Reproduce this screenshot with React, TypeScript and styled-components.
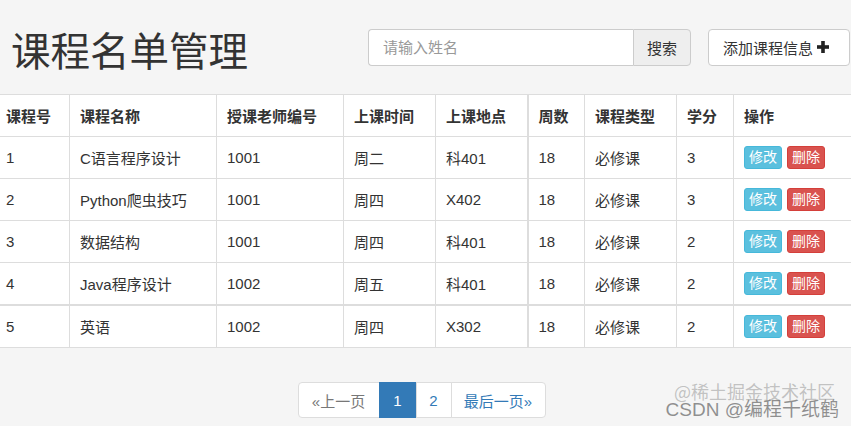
import React from 'react';
import styled, { createGlobalStyle } from 'styled-components';

const GlobalStyle = createGlobalStyle`
  html, body {
    margin: 0;
    padding: 0;
    background: #f5f5f5;
    overflow: hidden;
  }
  body {
    font-family: "Liberation Sans", "Noto Sans CJK SC", sans-serif;
    color: #333;
  }
`;

interface Course {
  id: number;
  name: string;
  teacher: string;
  time: string;
  place: string;
  weeks: number;
  type: string;
  credit: number;
}

const courses: Course[] = [
  { id: 1, name: 'C语言程序设计', teacher: '1001', time: '周二', place: '科401', weeks: 18, type: '必修课', credit: 3 },
  { id: 2, name: 'Python爬虫技巧', teacher: '1001', time: '周四', place: 'X402', weeks: 18, type: '必修课', credit: 3 },
  { id: 3, name: '数据结构', teacher: '1001', time: '周四', place: '科401', weeks: 18, type: '必修课', credit: 2 },
  { id: 4, name: 'Java程序设计', teacher: '1002', time: '周五', place: '科401', weeks: 18, type: '必修课', credit: 2 },
  { id: 5, name: '英语', teacher: '1002', time: '周四', place: 'X302', weeks: 18, type: '必修课', credit: 2 },
];

const columns = ['课程号', '课程名称', '授课老师编号', '上课时间', '上课地点', '周数', '课程类型', '学分', '操作'];
const colWidths = [74, 147, 127, 92, 92, 57, 92, 57, 118];

const Page = styled.div`
  width: 851px;
  height: 426px;
`;

const Header = styled.div`
  height: 94px;
  display: flex;
  align-items: center;
  padding: 0 1px 0 11px;
  box-sizing: border-box;
`;

const Title = styled.h1`
  margin: 0;
  padding-top: 4px;
  font-size: 39.5px;
  font-weight: 400;
  line-height: 1.1;
  color: #333;
  font-family: "Noto Sans CJK SC", sans-serif;
`;

const SearchGroup = styled.div`
  margin-left: auto;
  display: flex;
  height: 37px;
  margin-right: 17px;
`;

const SearchInput = styled.input`
  width: 265px;
  box-sizing: border-box;
  border: 1px solid #ccc;
  border-right: none;
  border-radius: 4px 0 0 4px;
  padding: 0 14px;
  font-size: 15px;
  font-family: inherit;
  background: #fff;
  outline: none;
  &::placeholder {
    color: #999;
  }
`;

const SearchButton = styled.button`
  width: 58px;
  box-sizing: border-box;
  border: 1px solid #ccc;
  border-radius: 0 4px 4px 0;
  background: #eee;
  color: #333;
  font-size: 15px;
  font-family: inherit;
  padding: 0;
`;

const AddButton = styled.button`
  display: flex;
  align-items: center;
  gap: 4px;
  height: 37px;
  width: 142px;
  box-sizing: border-box;
  border: 1px solid #ccc;
  border-radius: 4px;
  background: #fff;
  color: #333;
  font-size: 15px;
  font-family: inherit;
  padding: 0 0 0 14px;
`;

const Table = styled.table`
  width: calc(100% + 5px);
  margin-left: -5px;
  border-collapse: collapse;
  table-layout: fixed;
  background: #fff;
  font-size: 15px;
`;

const Th = styled.th<{ $thick?: boolean }>`
  height: 41px;
  padding: 0 10px;
  text-align: left;
  font-weight: 700;
  color: #333;
  border: 1px solid #ddd;
  border-left-width: ${p => (p.$thick ? '2px' : '1px')};
`;

const Row = styled.tr<{ $thick?: boolean }>`
  & > td {
    border-top-width: ${p => (p.$thick ? '2px' : '1px')};
  }
`;

const Td = styled.td<{ $thick?: boolean }>`
  height: 41px;
  padding: 0 10px;
  border: 1px solid #ddd;
  border-left-width: ${p => (p.$thick ? '2px' : '1px')};
  color: #333;
  white-space: nowrap;
`;

const Actions = styled.div`
  display: flex;
  gap: 5px;
`;

const SmallButton = styled.button<{ $kind: 'info' | 'danger' }>`
  height: 23px;
  padding: 0 4px;
  box-sizing: border-box;
  border-radius: 3px;
  font-size: 14px;
  font-family: inherit;
  line-height: 21px;
  color: #fff;
  background: ${p => (p.$kind === 'info' ? '#5bc0de' : '#d9534f')};
  border: 1px solid ${p => (p.$kind === 'info' ? '#46b8da' : '#d43f3a')};
`;

const Footer = styled.div`
  position: relative;
  display: flex;
  justify-content: center;
  padding-top: 34px;
  padding-right: 8px;
`;

const Pager = styled.ul`
  display: flex;
  margin: 0;
  padding: 0;
  list-style: none;
  border-radius: 4px;
`;

const PageItem = styled.li<{ $w: number; $active?: boolean; $disabled?: boolean }>`
  width: ${p => p.$w}px;
  height: 36px;
  box-sizing: border-box;
  display: flex;
  align-items: center;
  justify-content: center;
  font-size: 15px;
  border: 1px solid ${p => (p.$active ? '#337ab7' : '#ddd')};
  margin-left: -1px;
  background: ${p => (p.$active ? '#337ab7' : '#fff')};
  color: ${p => (p.$active ? '#fff' : p.$disabled ? '#777' : '#337ab7')};
  &:first-child {
    margin-left: 0;
    border-radius: 4px 0 0 4px;
  }
  &:last-child {
    border-radius: 0 4px 4px 0;
  }
`;

const Watermark = styled.div`
  position: absolute;
  right: 12px;
  bottom: -2px;
  font-size: 19px;
  color: rgba(110, 110, 110, 0.75);
  font-family: "Liberation Sans", "Noto Sans CJK SC", sans-serif;
  line-height: 20px;
`;

const WatermarkTop = styled.div`
  position: absolute;
  right: 16px;
  bottom: 17px;
  font-size: 18px;
  color: rgba(150, 150, 150, 0.55);
  font-family: "Noto Sans CJK SC", sans-serif;
  line-height: 20px;
`;

const PlusIcon = () => (
  <svg width="12" height="12" viewBox="0 0 12 12">
    <rect x="4.2" y="0" width="3.6" height="12" fill="#222" />
    <rect x="0" y="4.2" width="12" height="3.6" fill="#222" />
  </svg>
);

const App: React.FC = () => {
  return (
    <Page>
      <GlobalStyle />
      <Header>
        <Title>课程名单管理</Title>
        <SearchGroup>
          <SearchInput placeholder="请输入姓名" />
          <SearchButton>搜索</SearchButton>
        </SearchGroup>
        <AddButton>
          添加课程信息 <PlusIcon />
        </AddButton>
      </Header>

      <Table>
        <colgroup>
          {colWidths.map((w, i) => (
            <col key={i} style={{ width: w }} />
          ))}
        </colgroup>
        <thead>
          <tr>
            {columns.map((c, i) => (
              <Th key={c} $thick={i === 5}>{c}</Th>
            ))}
          </tr>
        </thead>
        <tbody>
          {courses.map((c, idx) => (
            <Row key={c.id} $thick={idx === 4}>
              <Td>{c.id}</Td>
              <Td>{c.name}</Td>
              <Td>{c.teacher}</Td>
              <Td>{c.time}</Td>
              <Td>{c.place}</Td>
              <Td $thick>{c.weeks}</Td>
              <Td>{c.type}</Td>
              <Td>{c.credit}</Td>
              <Td>
                <Actions>
                  <SmallButton $kind="info">修改</SmallButton>
                  <SmallButton $kind="danger">删除</SmallButton>
                </Actions>
              </Td>
            </Row>
          ))}
        </tbody>
      </Table>

      <Footer>
        <Pager>
          <PageItem $w={82} $disabled>«上一页</PageItem>
          <PageItem $w={38} $active>1</PageItem>
          <PageItem $w={36}>2</PageItem>
          <PageItem $w={95}>最后一页»</PageItem>
        </Pager>
        <WatermarkTop>@稀土掘金技术社区</WatermarkTop>
        <Watermark>CSDN @编程千纸鹤</Watermark>
      </Footer>
    </Page>
  );
};

export default App;
